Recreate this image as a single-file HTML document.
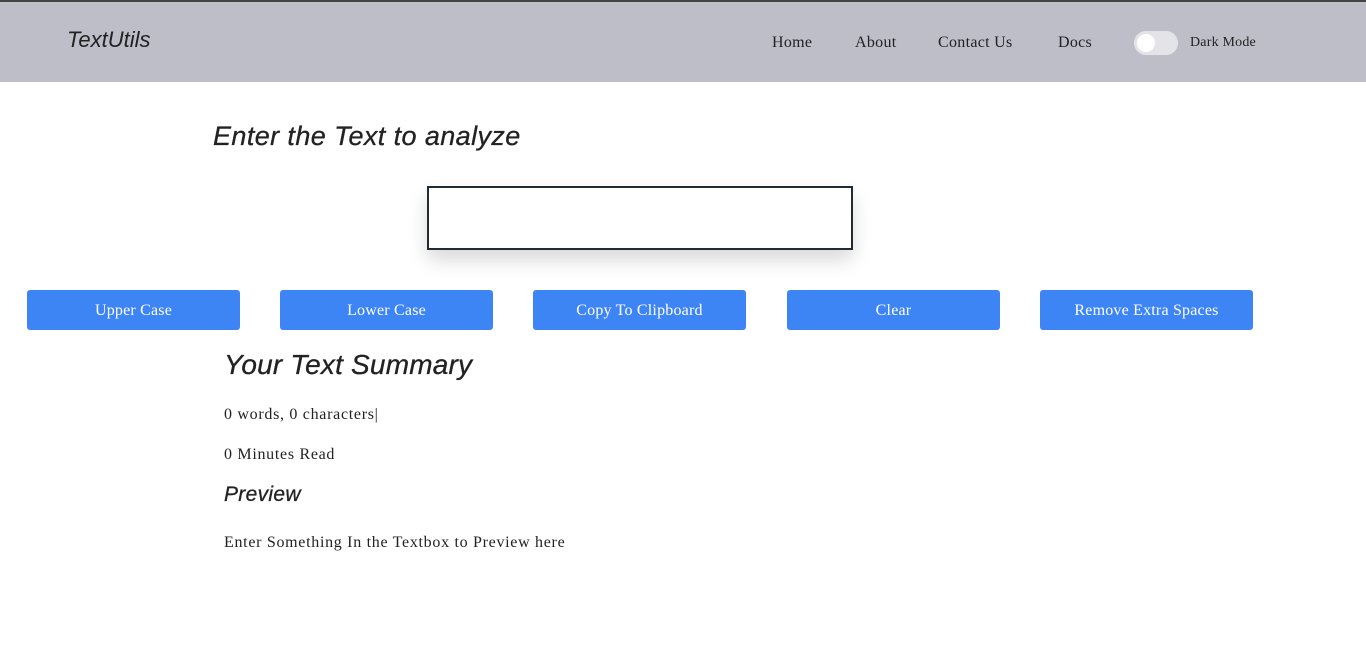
<!DOCTYPE html>
<html><head><meta charset="utf-8">
<style>
*{box-sizing:border-box;margin:0;padding:0}
body{width:1366px;height:657px;overflow:hidden;background:#fff;font-family:"Liberation Serif",serif;color:#212529;position:relative}
.top{position:absolute;left:0;top:0;width:1366px;height:2px;background:#444}
.nav{position:absolute;left:0;top:2px;width:1366px;height:80px;background:#bebec8}
.brand{position:absolute;left:67px;top:25px;font-family:"Liberation Sans",sans-serif;font-style:italic;font-size:22px;color:#222;letter-spacing:0}
.nl{position:absolute;top:32px;font-size:16px;color:#222;letter-spacing:0.3px}
.tog{position:absolute;left:1134px;top:29px;width:44px;height:24px;border-radius:12px;background:#e4e4e8}
.tog:after{content:"";position:absolute;left:3px;top:3px;width:18px;height:18px;border-radius:50%;background:#fff}
.dm{position:absolute;left:1190px;top:33px;font-size:14px;color:#222;letter-spacing:0.2px}
h1{position:absolute;left:213px;top:121px;font-family:"Liberation Sans",sans-serif;font-style:italic;font-weight:normal;font-size:27px;letter-spacing:0.4px;color:#222;-webkit-text-stroke:0.3px #222}
.ta{position:absolute;left:427px;top:186px;width:426px;height:64px;border:2px solid #212b36;box-shadow:0 10px 18px rgba(0,0,0,.15);background:#fff}
.btn{position:absolute;top:290px;width:213px;height:40px;background:#3d84f5;border-radius:3px;color:#fff;font-size:16px;text-align:center;line-height:42px;letter-spacing:0.2px}
h2{position:absolute;left:224px;top:349px;font-family:"Liberation Sans",sans-serif;font-style:italic;font-weight:normal;font-size:28px;letter-spacing:0.2px;color:#222;-webkit-text-stroke:0.3px #222}
h3{position:absolute;left:224px;top:483px;font-family:"Liberation Sans",sans-serif;font-style:italic;font-weight:normal;font-size:21px;letter-spacing:0.3px;color:#222;-webkit-text-stroke:0.3px #222}
p{position:absolute;left:224px;font-size:16px;color:#222;letter-spacing:0.7px}
</style></head><body>
<div class="top"></div>
<div class="nav">
<div class="brand">TextUtils</div>
<div class="nl" style="left:772px">Home</div>
<div class="nl" style="left:855px">About</div>
<div class="nl" style="left:938px">Contact Us</div>
<div class="nl" style="left:1058px">Docs</div>
<div class="tog"></div>
<div class="dm">Dark Mode</div>
</div>
<h1>Enter the Text to analyze</h1>
<div class="ta"></div>
<div class="btn" style="left:27px">Upper Case</div>
<div class="btn" style="left:280px">Lower Case</div>
<div class="btn" style="left:533px">Copy To Clipboard</div>
<div class="btn" style="left:787px">Clear</div>
<div class="btn" style="left:1040px">Remove Extra Spaces</div>
<h2>Your Text Summary</h2>
<p style="top:406px">0 words, 0 characters|</p>
<p style="top:446px">0 Minutes Read</p>
<h3>Preview</h3>
<p style="top:534px">Enter Something In the Textbox to Preview here</p>
</body></html>
